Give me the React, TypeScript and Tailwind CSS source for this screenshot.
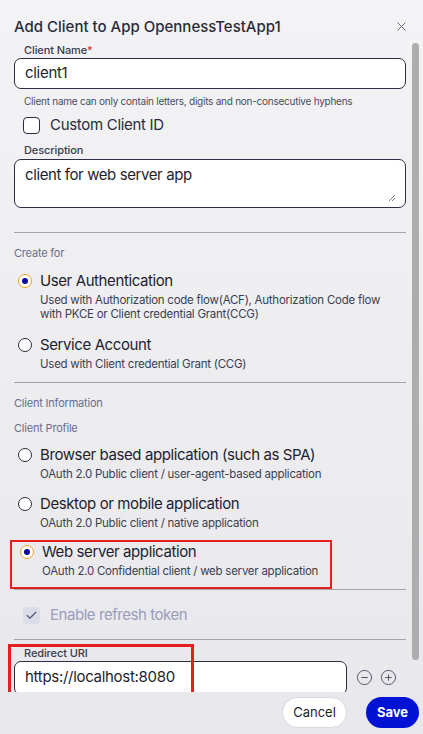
import React, { useState } from 'react';
import { X, CircleMinus, CirclePlus, Check } from 'lucide-react';

const font = { fontFamily: 'Inter, "Noto Sans", sans-serif' };

type RadioProps = {
  checked: boolean;
  title: string;
  lines: string[];
  onSelect: () => void;
};

const Radio: React.FC<{ checked: boolean }> = ({ checked }) => (
  <span
    className={`flex h-[14px] w-[14px] shrink-0 items-center justify-center rounded-full border-[1.5px] bg-white ${
      checked ? 'border-[#f0a020]' : 'border-[#2a2c3e]'
    }`}
  >
    {checked && <span className="h-[6px] w-[6px] rounded-full bg-[#0a0a9e]" />}
  </span>
);

const RadioOption: React.FC<RadioProps> = ({ checked, title, lines, onSelect }) => (
  <div className="flex cursor-pointer flex-col" onClick={onSelect}>
    <div className="flex h-5 items-center">
      <div className="w-[26px] pl-[4px]">
        <Radio checked={checked} />
      </div>
      <span className="whitespace-nowrap text-[15px] leading-5 tracking-[-0.4px] text-[#1c1e2e]">{title}</span>
    </div>
    <div className="mt-[2px] pl-[26px]">
      {lines.map((line) => (
        <div key={line} className="whitespace-nowrap text-[11.5px] leading-[14px] tracking-[-0.25px] text-[#3c3e50]">
          {line}
        </div>
      ))}
    </div>
  </div>
);

const Divider: React.FC<{ className?: string }> = ({ className = '' }) => (
  <div className={`h-px bg-[#a4a4ac] ${className}`} />
);

const FieldLabel: React.FC<{ children: React.ReactNode; className?: string }> = ({ children, className = '' }) => (
  <label className={`block pl-[10px] text-[11px] leading-4 font-medium tracking-[-0.1px] text-[#3a3c4c] ${className}`}>
    {children}
  </label>
);

const SectionLabel: React.FC<{ children: React.ReactNode; className?: string }> = ({ children, className = '' }) => (
  <p className={`text-[11px] leading-4 tracking-[-0.2px] text-[#6a6e88] ${className}`}>{children}</p>
);

export default function App() {
  const [createFor, setCreateFor] = useState('user');
  const [profile, setProfile] = useState('web');
  const [customId, setCustomId] = useState(false);

  return (
    <div
      style={font}
      className="flex h-[734px] w-[423px] flex-col overflow-hidden bg-gradient-to-b from-[#f3f3f5] to-[#e8e8ec]"
    >
      {/* Header */}
      <div className="flex h-[40px] shrink-0 items-start justify-between pl-[14px] pr-[14px] pt-[17px]">
        <h2 className="text-[15px] leading-5 font-medium text-[#2a2c3c]">Add Client to App OpennessTestApp1</h2>
        <X size={15} strokeWidth={1.5} className="mt-[2px] text-[#5a5e75]" />
      </div>

      {/* Scrollable body */}
      <div className="flex h-[652px] shrink-0">
        <div className="flex-1 overflow-hidden pl-[14px] pr-[6px]">
          <FieldLabel className="mt-[2px]">
            Client Name<span className="text-[#e03030]">*</span>
          </FieldLabel>
          <div className="flex h-[31px] items-center rounded-[7px] border border-[#2a2d45] bg-white px-[10px] text-[15px] tracking-[-0.3px] text-[#1c1e2e]">
            client1
          </div>
          <p className="mt-[5px] whitespace-nowrap pl-[10px] text-[10px] leading-[14px] tracking-[-0.25px] text-[#4a4c60]">
            Client name can only contain letters, digits and non-consecutive hyphens
          </p>

          <div className="mt-[7px] flex h-5 cursor-pointer items-center pl-[9px]" onClick={() => setCustomId(!customId)}>
            <span className="flex h-[17px] w-[17px] items-center justify-center rounded-[4px] border-[1.5px] border-[#2a2c3e] bg-white">
              {customId && <Check size={12} strokeWidth={2.5} className="text-[#2a2c3e]" />}
            </span>
            <span className="ml-[10px] text-[15px] leading-5 tracking-[-0.3px] text-[#2a2c3c]">Custom Client ID</span>
          </div>

          <FieldLabel className="mt-[7px]">Description</FieldLabel>
          <div className="relative mt-[1px] h-[49px] rounded-[7px] border border-[#2a2d45] bg-white px-[10px] pt-[5px] text-[15px] leading-5 tracking-[-0.4px] text-[#1c1e2e]">
            client for web server app
            <svg className="absolute bottom-[5px] right-[9px]" width="8" height="8" viewBox="0 0 8 8">
              <path d="M1 7L7 1M4 7L7 4" stroke="#6a6c78" strokeWidth="0.9" />
            </svg>
          </div>

          <Divider className="mt-[24px]" />

          <SectionLabel className="mt-[12px]">Create for</SectionLabel>
          <div className="mt-[10px]">
            <RadioOption
              checked={createFor === 'user'}
              onSelect={() => setCreateFor('user')}
              title="User Authentication"
              lines={['Used with Authorization code flow(ACF), Authorization Code flow', 'with PKCE or Client credential Grant(CCG)']}
            />
          </div>
          <div className="mt-[14px]">
            <RadioOption
              checked={createFor === 'service'}
              onSelect={() => setCreateFor('service')}
              title="Service Account"
              lines={['Used with Client credential Grant (CCG)']}
            />
          </div>

          <Divider className="mt-[11px]" />

          <SectionLabel className="mt-[12px]">Client Information</SectionLabel>
          <SectionLabel className="mt-[9px]">Client Profile</SectionLabel>

          <div className="mt-[9px]">
            <RadioOption
              checked={profile === 'spa'}
              onSelect={() => setProfile('spa')}
              title="Browser based application (such as SPA)"
              lines={['OAuth 2.0 Public client / user-agent-based application']}
            />
          </div>
          <div className="mt-[13px]">
            <RadioOption
              checked={profile === 'native'}
              onSelect={() => setProfile('native')}
              title="Desktop or mobile application"
              lines={['OAuth 2.0 Public client / native application']}
            />
          </div>

          {/* highlighted option */}
          <div className="ml-[-4px] mt-[10px] w-[322px] border-2 border-[#e3201e] pb-[9px] pl-[4px]">
            <RadioOption
              checked={profile === 'web'}
              onSelect={() => setProfile('web')}
              title="Web server application"
              lines={['OAuth 2.0 Confidential client / web server application']}
            />
          </div>
          <Divider />

          <div className="mt-[15px] flex h-5 items-center pl-[9px]">
            <span className="flex h-[17px] w-[17px] items-center justify-center rounded-[4px] bg-[#dcdce8]">
              <Check size={13} strokeWidth={2.2} className="text-[#55587a]" />
            </span>
            <span className="ml-[10px] text-[15px] leading-5 tracking-[-0.45px] text-[#9a9cba]">Enable refresh token</span>
          </div>

          <Divider className="mt-[14px]" />

          <div className="relative">
            <FieldLabel className="mt-[6px] !leading-[15px]">Redirect URI</FieldLabel>
            <div className="flex items-start">
              <div className="flex h-[34px] w-[333px] items-start rounded-[7px] border border-[#2a2d45] bg-white px-[10px] pt-[5px] text-[15px] leading-5 tracking-[-0.3px] text-[#1c1e2e]">
                https://localhost:8080
              </div>
              <div className="ml-[9px] mt-[8px] flex items-center gap-[7px] text-[#4a4c60]">
                <CircleMinus size={17} strokeWidth={1.3} />
                <CirclePlus size={17} strokeWidth={1.3} />
              </div>
            </div>
            <div className="absolute left-[-6px] top-[-2px] h-[54px] w-[186px] border-[3px] border-[#e3201e]" />
          </div>
        </div>

        {/* scrollbar */}
        <div className="mr-[4px] mt-[3px] w-[7px]">
          <div className="h-[617px] rounded-full bg-[#adadad]" />
        </div>
      </div>

      {/* Footer */}
      <div className="flex flex-1 items-start justify-end gap-[19px] pr-[4px] pt-[5px]">
        <button className="h-[31px] w-[65px] rounded-full border border-[#d8d8e2] bg-white text-[13px] text-[#1c1e2e]">
          Cancel
        </button>
        <button className="h-[31px] w-[53px] rounded-full bg-[#0012d4] text-[13px] font-bold text-white">Save</button>
      </div>
    </div>
  );
}
